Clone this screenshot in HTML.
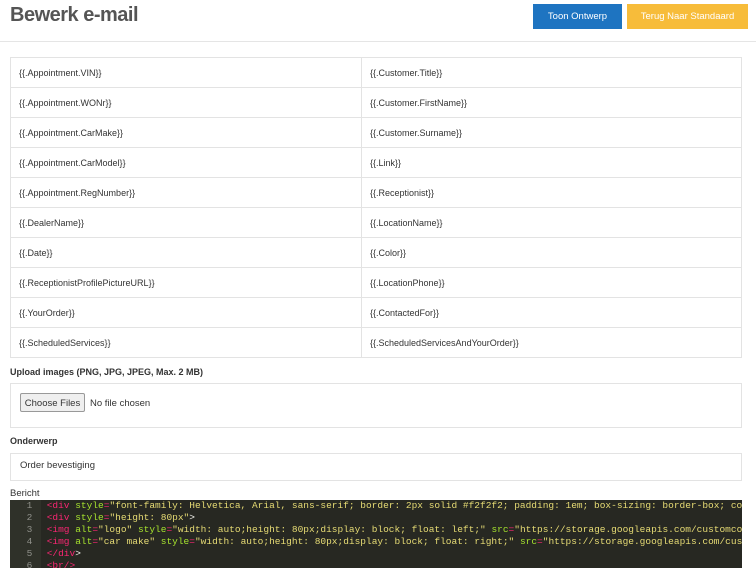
<!DOCTYPE html><html><head><style>
body{margin:0;width:756px;height:568px;overflow:hidden;background:#fff;font-family:"Liberation Sans",sans-serif;color:#333;position:relative}
.a{position:absolute}
h1{position:absolute;left:10px;top:4px;margin:0;font-size:20px;font-weight:bold;color:#555;letter-spacing:-0.5px}
.btn{position:absolute;top:4px;height:25px;line-height:25px;color:#fff;font-size:9.5px;text-align:center}
table{position:absolute;left:10px;top:57px;width:732px;border-collapse:collapse;table-layout:fixed}
td{border:1px solid #e3e3e3;height:29px;padding:0 0 0 8px;font-size:9px;color:#333}
.lbl{font-size:9px;font-weight:bold;color:#333}
.box{border:1px solid #e3e3e3;left:10px;width:730px}
.ed{left:10px;top:500px;width:732px;height:68px;background:#272822;font-family:"Liberation Mono",monospace;font-size:9.5px;color:#f8f8f2;overflow:hidden}
.ed div{height:12px;line-height:12px;white-space:pre}
.g{display:inline-block;width:31px;color:#8f908a;background:#2f3129;text-align:right;padding-right:3px;box-sizing:border-box}
.t{color:#f92672}.at{color:#a6e22e}.s{color:#e6db74}
</style></head><body>
<h1>Bewerk e-mail</h1>
<div class="btn" style="left:533px;width:89px;background:#1e74c1">Toon Ontwerp</div>
<div class="btn" style="left:627px;width:121px;background:#f7bc3a">Terug Naar Standaard</div>
<div class="a" style="left:0;top:41px;width:756px;height:1px;background:#e5e5e5"></div>
<table>
<colgroup><col style="width:351px"><col></colgroup>
<tr><td>{{.Appointment.VIN}}</td><td>{{.Customer.Title}}</td></tr>
<tr><td>{{.Appointment.WONr}}</td><td>{{.Customer.FirstName}}</td></tr>
<tr><td>{{.Appointment.CarMake}}</td><td>{{.Customer.Surname}}</td></tr>
<tr><td>{{.Appointment.CarModel}}</td><td>{{.Link}}</td></tr>
<tr><td>{{.Appointment.RegNumber}}</td><td>{{.Receptionist}}</td></tr>
<tr><td>{{.DealerName}}</td><td>{{.LocationName}}</td></tr>
<tr><td>{{.Date}}</td><td>{{.Color}}</td></tr>
<tr><td>{{.ReceptionistProfilePictureURL}}</td><td>{{.LocationPhone}}</td></tr>
<tr><td>{{.YourOrder}}</td><td>{{.ContactedFor}}</td></tr>
<tr><td>{{.ScheduledServices}}</td><td>{{.ScheduledServicesAndYourOrder}}</td></tr>
</table>
<div class="a lbl" style="left:10px;top:367px">Upload images (PNG, JPG, JPEG, Max. 2 MB)</div>
<div class="a box" style="top:383px;height:43px"></div>
<div class="a" style="left:20px;top:393px;width:65px;height:19px;border:1px solid #999;background:#efefef;border-radius:2px;font-size:9.5px;line-height:19px;text-align:center;box-sizing:border-box">Choose Files</div>
<div class="a" style="left:90px;top:398px;font-size:9.5px">No file chosen</div>
<div class="a lbl" style="left:10px;top:436px">Onderwerp</div>
<div class="a box" style="top:453px;height:26px"></div>
<div class="a" style="left:20px;top:460px;font-size:9.5px">Order bevestiging</div>
<div class="a" style="left:10px;top:488px;font-size:9.5px">Bericht</div>
<div class="a ed">
<div><span class="g">1 </span> <span class="t">&lt;div</span> <span class="at">style</span><span class="t">=</span><span class="s">"font-family: Helvetica, Arial, sans-serif; border: 2px solid #f2f2f2; padding: 1em; box-sizing: border-box; color</span></div>
<div><span class="g">2 </span> <span class="t">&lt;div</span> <span class="at">style</span><span class="t">=</span><span class="s">"height: 80px"</span>&gt;</div>
<div><span class="g">3 </span> <span class="t">&lt;img</span> <span class="at">alt</span><span class="t">=</span><span class="s">"logo"</span> <span class="at">style</span><span class="t">=</span><span class="s">"width: auto;height: 80px;display: block; float: left;"</span> <span class="at">src</span><span class="t">=</span><span class="s">"https://storage.googleapis.com/customco</span></div>
<div><span class="g">4 </span> <span class="t">&lt;img</span> <span class="at">alt</span><span class="t">=</span><span class="s">"car make"</span> <span class="at">style</span><span class="t">=</span><span class="s">"width: auto;height: 80px;display: block; float: right;"</span> <span class="at">src</span><span class="t">=</span><span class="s">"https://storage.googleapis.com/cus</span></div>
<div><span class="g">5 </span> <span class="t">&lt;/div</span>&gt;</div>
<div><span class="g">6 </span> <span class="t">&lt;br/&gt;</span></div>
</div>
</body></html>
